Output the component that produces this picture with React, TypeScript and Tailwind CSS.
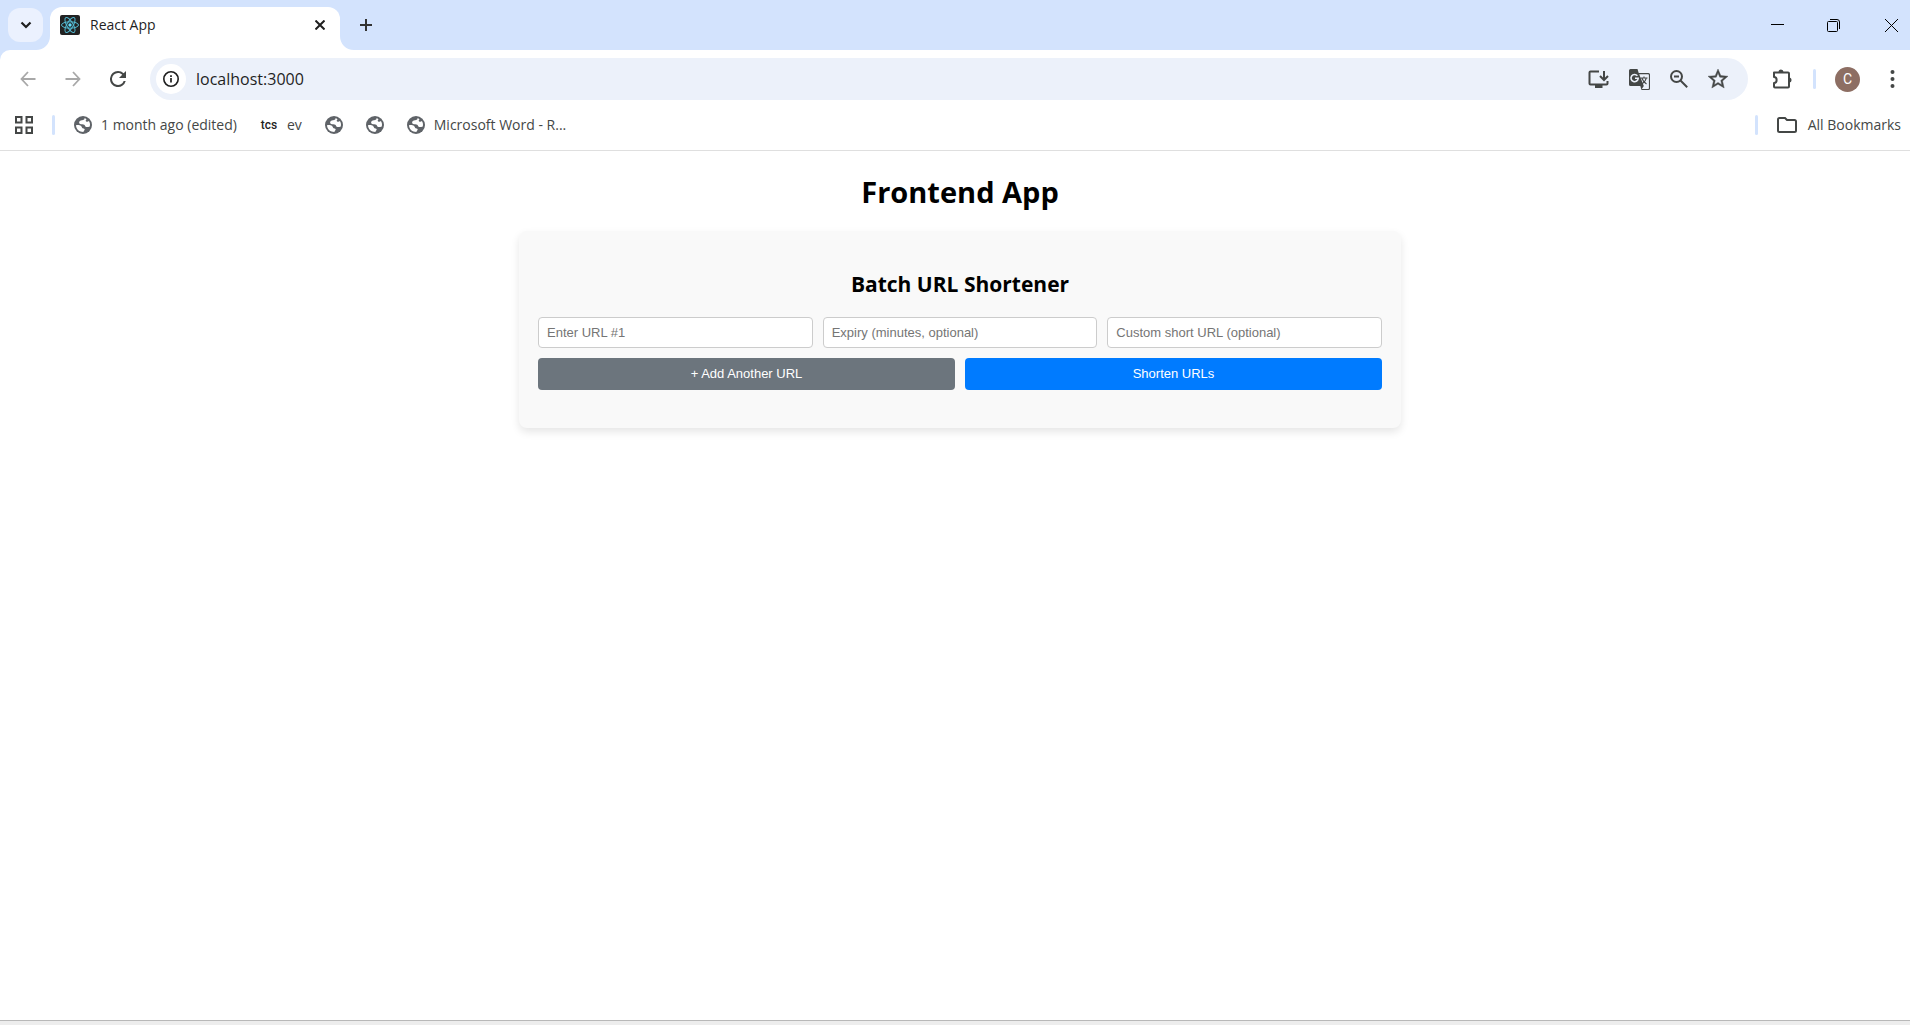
import type { ReactNode } from "react";

const ui = "font-['Open_Sans','Noto_Sans',sans-serif]";
const form = "font-['Liberation_Sans',Arial,sans-serif]";

function GlobeIcon() {
  return (
    <svg viewBox="0 0 18 18" className="size-[18px] shrink-0" aria-hidden="true">
      <circle cx="9" cy="9" r="9" fill="#5f6368" />
      <path
        d="M10.500 2C11 3.500 9.600 4 8 4.300 6.300 4.600 5 5.500 5.100 6.700c.1 1.200 1.600 1.500 3.200 1.500 1.800 0 2.500.8 2.800 1.800.4 1.100 2.100 1.300 4.700.4.500-2 .1-3.900-.9-5.300-.8.6-1.900.8-2.700.3-.9-.5-.5-1.500.3-1.900-.6-.7-1.300-1.200-2-1.500z"
        fill="#fff"
      />
      <path
        d="M2 9.200c1.600-.4 3.900-.2 5.100.7 1 .8.600 1.800 1.500 2.300.8.4 2 .2 2.100 1.200.1 1-1.100 1.100-1.300 2.500-4-.1-7.200-2.500-7.400-6.700z"
        fill="#fff"
      />
    </svg>
  );
}

function ReactFavicon() {
  return (
    <svg viewBox="0 0 20 20" className="size-5 shrink-0" aria-hidden="true">
      <rect width="20" height="20" rx="2" fill="#222" />
      <g fill="none" stroke="#53b9d1" strokeWidth="1">
        <ellipse cx="10" cy="10" rx="8.500" ry="3.200" />
        <ellipse cx="10" cy="10" rx="8.500" ry="3.200" transform="rotate(60 10 10)" />
        <ellipse cx="10" cy="10" rx="8.500" ry="3.200" transform="rotate(120 10 10)" />
      </g>
      <circle cx="10" cy="10" r="1.700" fill="#61dafb" />
    </svg>
  );
}

function Divider() {
  return <span className="h-5 w-[3px] shrink-0 rounded-full bg-[#d3e3fd]" />;
}

function IconButton({ label, className, children }: { label: string; className: string; children: ReactNode }) {
  return (
    <button type="button" aria-label={label} className={`flex shrink-0 items-center justify-center ${className}`}>
      {children}
    </button>
  );
}

function TabStrip() {
  return (
    <div className="flex h-[50px] items-start bg-[#d3e3fd] pl-2 text-[#1f1f1f]">
      <IconButton label="Search tabs" className="mt-2 h-[34px] w-[35px] rounded-xl bg-[#ebf1fe]">
        <svg viewBox="0 0 12 8" className="h-2 w-3" fill="none" stroke="currentColor" strokeWidth="2.200">
          <path d="M1.500 1.500 6 6l4.500-4.500" />
        </svg>
      </IconButton>
      <div className="relative mt-[7px] ml-[7px] flex h-[43px] w-[290px] items-center rounded-t-xl bg-white pr-[15px] pb-[7px] pl-[10px]">
        <svg viewBox="0 0 14 14" className="absolute bottom-0 -left-[14px] size-[14px]" aria-hidden="true">
          <path d="M14 0v14H0C8 14 14 8 14 0z" fill="#fff" />
        </svg>
        <svg viewBox="0 0 14 14" className="absolute -right-[14px] bottom-0 size-[14px]" aria-hidden="true">
          <path d="M0 0v14h14C6 14 0 8 0 0z" fill="#fff" />
        </svg>
        <ReactFavicon />
        <span className="ml-[10px] flex-1 text-sm">React App</span>
        <IconButton label="Close tab" className="">
          <svg viewBox="0 0 10 10" className="size-[10px]" stroke="currentColor" strokeWidth="2">
            <path d="m.5.500 9 9m0-9-9 9" />
          </svg>
        </IconButton>
      </div>
      <IconButton label="New tab" className="ml-[20px] h-[50px] w-3">
        <svg viewBox="0 0 12 12" className="size-3" stroke="#333" strokeWidth="2" shapeRendering="crispEdges">
          <path d="M6 0v12M0 6h12" />
        </svg>
      </IconButton>
      <div className="ml-auto flex h-[50px] items-center pr-3 text-black">
        <IconButton label="Minimize" className="mr-[43px] h-[13px]">
          <svg viewBox="0 0 13 13" className="size-[13px]" stroke="currentColor">
            <path d="M0 5.500h13" />
          </svg>
        </IconButton>
        <IconButton label="Restore" className="mr-[45px]">
          <svg viewBox="0 0 13 13" className="size-[13px]" fill="none" stroke="currentColor">
            <rect x=".5" y="2.500" width="10" height="10" rx="1" />
            <path d="M3 .5h7a2.500 2.500 0 0 1 2.500 2.500v7" />
          </svg>
        </IconButton>
        <IconButton label="Close window" className="">
          <svg viewBox="0 0 13 13" className="size-[13px]" stroke="currentColor">
            <path d="m0 0 13 13M13 0 0 13" />
          </svg>
        </IconButton>
      </div>
    </div>
  );
}

function AddressBar() {
  return (
    <div className="flex h-[42px] flex-1 items-center rounded-full bg-[#ecf1fa] pr-[20px] pl-[6px] text-[#444746]">
      <IconButton label="View site information" className="size-[30px] rounded-full bg-white text-[#1f1f1f]">
        <svg viewBox="0 0 16 16" className="size-4" fill="none" stroke="currentColor">
          <circle cx="8" cy="8" r="7.200" strokeWidth="1.600" />
          <path d="M8 7v4.500M8 4.200v1.700" strokeWidth="1.700" />
        </svg>
      </IconButton>
      <div className="ml-[10px] flex-1">
        <input
          type="text"
          aria-label="Address"
          defaultValue="localhost:3000"
          className="w-full bg-transparent text-base text-[#1f1f1f] outline-none"
        />
      </div>
      <div className="flex items-center gap-5">
        <IconButton label="Install app" className="w-[21px]">
          <svg viewBox="0 0 21 19" className="h-[19px] w-[21px]" fill="none" stroke="currentColor" strokeWidth="2">
            <path d="M11 1.500H2.500q-1 0-1 1v11q0 1 1 1h16q1 0 1-1V11" />
            <path d="M16 1v8.500M12 6l4 4 4-4" />
            <path d="M7 16.500h7.500" strokeWidth="3" />
          </svg>
        </IconButton>
        <IconButton label="Translate this page" className="w-[21px]">
          <svg viewBox="0 0 21 21" className="size-[21px]" aria-hidden="true">
            <path
              d="M1.500 0h7l1.200 4H19.500q1.500 0 1.500 1.500v14q0 1.500-1.500 1.500h-7l-1.200-4H1.500Q0 17 0 15.500v-14Q0 0 1.500 0z"
              fill="#444746"
            />
            <path d="M10.200 5.200h9q.7 0 .7.700v13.300q0 .7-.7.700h-6.400l2-3z" fill="#ecf1fa" />
            <path d="M8.400 6.800A3.600 3.600 0 1 0 9.200 9.200H6" fill="none" stroke="#ecf1fa" strokeWidth="1.600" />
            <path
              d="M11.500 9h7M15 7.500V9m2.300 0c-.7 3-2.800 5-4.800 6.200M12.800 9c.8 2.500 2.700 4.500 4.700 6"
              fill="none"
              stroke="#444746"
              strokeWidth="1.100"
            />
          </svg>
        </IconButton>
        <IconButton label="Zoom" className="w-[18px]">
          <svg viewBox="0 0 18 18" className="size-[18px]" fill="none" stroke="currentColor" strokeWidth="2">
            <circle cx="6.500" cy="6.500" r="5.500" />
            <path d="m10.500 10.500 6.700 6.700M4 6.500h5" />
          </svg>
        </IconButton>
        <IconButton label="Bookmark this tab" className="w-5">
          <svg viewBox="2 2 20 20" className="size-5" fill="currentColor" stroke="currentColor" strokeWidth=".4">
            <path d="m22 9.240-7.190-.62L12 2 9.190 8.630 2 9.240l5.460 4.730L5.820 21 12 17.270 18.180 21l-1.630-7.030L22 9.240zM12 15.400l-3.760 2.270 1-4.280-3.320-2.880 4.380-.38L12 6.100l1.710 4.040 4.380.38-3.320 2.880 1 4.280L12 15.400z" />
          </svg>
        </IconButton>
      </div>
    </div>
  );
}

function Toolbar() {
  return (
    <div className="bg-[#d3e3fd]">
      <div className="flex h-[54px] items-center rounded-tl-[10px] bg-white pt-1 pr-[15px] pl-[20px]">
        <div className="flex w-[130px] items-center gap-[29px] text-[#a8a8a8]">
          <IconButton label="Back" className="">
            <svg viewBox="0 0 16 16" className="size-4" fill="none" stroke="currentColor" strokeWidth="1.800">
              <path d="M15.500 8H2M8 1 1.500 8 8 15" />
            </svg>
          </IconButton>
          <IconButton label="Forward" className="">
            <svg viewBox="0 0 16 16" className="size-4" fill="none" stroke="currentColor" strokeWidth="1.800">
              <path d="M.5 8H14M8 1l6.500 7L8 15" />
            </svg>
          </IconButton>
          <IconButton label="Reload" className="text-[#444746]">
            <svg viewBox="4 4 16 16" className="size-4" fill="currentColor">
              <path d="M17.650 6.350A7.958 7.958 0 0 0 12 4a8 8 0 1 0 7.730 10h-2.080A6 6 0 1 1 12 6c1.660 0 3.140.69 4.220 1.780L13 11h7V4l-2.350 2.350z" />
            </svg>
          </IconButton>
        </div>
        <AddressBar />
        <IconButton label="Extensions" className="ml-[24px] text-[#444746]">
          <svg viewBox="0 0 20 20" className="size-5" fill="none" stroke="currentColor" strokeWidth="2">
            <path
              d="M2 3.500h14q1 0 1 1v13q0 1-1 1H3q-1 0-1-1V14c3.500 0 3.500-6 0-6V3.500z"
              strokeLinejoin="round"
            />
            <path
              d="M6.500 3a2.500 2.500 0 0 1 5 0zM17 8.500a2.500 2.500 0 0 1 0 5z"
              fill="currentColor"
              stroke="none"
            />
          </svg>
        </IconButton>
        <div className="mr-[19px] ml-[21px] flex">
          <Divider />
        </div>
        <IconButton label="Profile" className="size-[25px] rounded-full bg-[#8d6e63] text-sm text-white">
          <span className="font-['Roboto',sans-serif]">C</span>
        </IconButton>
        <IconButton label="Menu" className="ml-[30px] text-[#444746]">
          <svg viewBox="0 0 5 18" className="h-[18px] w-[5px]" fill="currentColor">
            <circle cx="2.500" cy="2" r="2" />
            <circle cx="2.500" cy="9" r="2" />
            <circle cx="2.500" cy="16" r="2" />
          </svg>
        </IconButton>
      </div>
    </div>
  );
}

function Bookmark({ icon, children }: { icon: ReactNode; children?: ReactNode }) {
  return (
    <a href="#" className="flex items-center gap-[9px] whitespace-nowrap">
      {icon}
      {children}
    </a>
  );
}

function BookmarksBar() {
  return (
    <nav
      aria-label="Bookmarks"
      className="flex h-[47px] items-center border-b border-[#dfdfdf] bg-white pr-[9px] pb-1 pl-[15px] text-sm text-[#444746]"
    >
      <IconButton label="Apps" className="mr-[19px]">
        <svg viewBox="0 0 18 18" className="size-[18px]" fill="none" stroke="currentColor" strokeWidth="2">
          <rect x="1" y="1" width="5.500" height="5.500" />
          <rect x="11.500" y="1" width="5.500" height="5.500" />
          <rect x="1" y="11.500" width="5.500" height="5.500" />
          <rect x="11.500" y="11.500" width="5.500" height="5.500" />
        </svg>
      </IconButton>
      <Divider />
      <div className="ml-[19px] flex items-center gap-[23px]">
        <Bookmark icon={<GlobeIcon />}>1 month ago (edited)</Bookmark>
        <Bookmark icon={<span className="w-[18px] text-center font-['Roboto'] text-xs font-medium text-[#222]">tcs</span>}>
          ev
        </Bookmark>
        <Bookmark icon={<GlobeIcon />} />
        <Bookmark icon={<GlobeIcon />} />
        <Bookmark icon={<GlobeIcon />}>Microsoft Word - R...</Bookmark>
      </div>
      <div className="ml-auto flex items-center">
        <Divider />
        <a href="#" className="ml-[19px] flex items-center gap-[11px] whitespace-nowrap">
          <svg
            viewBox="0 0 20 16"
            className="h-4 w-5"
            fill="none"
            stroke="currentColor"
            strokeWidth="2"
            aria-hidden="true"
          >
            <path d="M1 13.500v-11Q1 1 2.500 1H8l2 2h7.500Q19 3 19 4.500v9q0 1.500-1.500 1.500h-15Q1 15 1 13.500z" />
          </svg>
          All Bookmarks
        </a>
      </div>
    </nav>
  );
}

function Field({ label }: { label: string }) {
  return (
    <input
      type="text"
      aria-label={label}
      placeholder={label}
      className="h-[31px] min-w-0 flex-1 rounded border border-[#ccc] bg-white px-2 text-[13px] placeholder:text-[#757575]"
    />
  );
}

export default function App() {
  return (
    <div className={`flex min-h-screen flex-col bg-white ${ui}`}>
      <header>
        <TabStrip />
        <Toolbar />
        <BookmarksBar />
      </header>
      <main className="flex-1 pt-[21px] pl-[10px] text-black">
        <h1 className="text-center text-[29px] leading-10 font-bold">Frontend App</h1>
        <section className="mx-auto mt-[19px] max-w-[882px] rounded-lg bg-[#f9f9f9] px-[19px] py-[38px] shadow-[0_4px_8px_rgba(0,0,0,0.1)]">
          <h2 className="text-center text-[21px] leading-[30px] font-bold">Batch URL Shortener</h2>
          <form className={`mt-[18px] ${form}`} onSubmit={(event) => event.preventDefault()}>
            <div className="flex gap-[10px]">
              <Field label="Enter URL #1" />
              <Field label="Expiry (minutes, optional)" />
              <Field label="Custom short URL (optional)" />
            </div>
            <div className="mt-[10px] flex gap-[10px] text-[13px] text-white">
              <button type="button" className="h-8 flex-1 rounded bg-[#6c757d]">
                + Add Another URL
              </button>
              <button type="submit" className="h-8 flex-1 rounded bg-[#007bff]">
                Shorten URLs
              </button>
            </div>
          </form>
        </section>
      </main>
      <footer className="h-[5px] border-t border-[#b8b8b8] bg-[#ededed]" />
    </div>
  );
}
